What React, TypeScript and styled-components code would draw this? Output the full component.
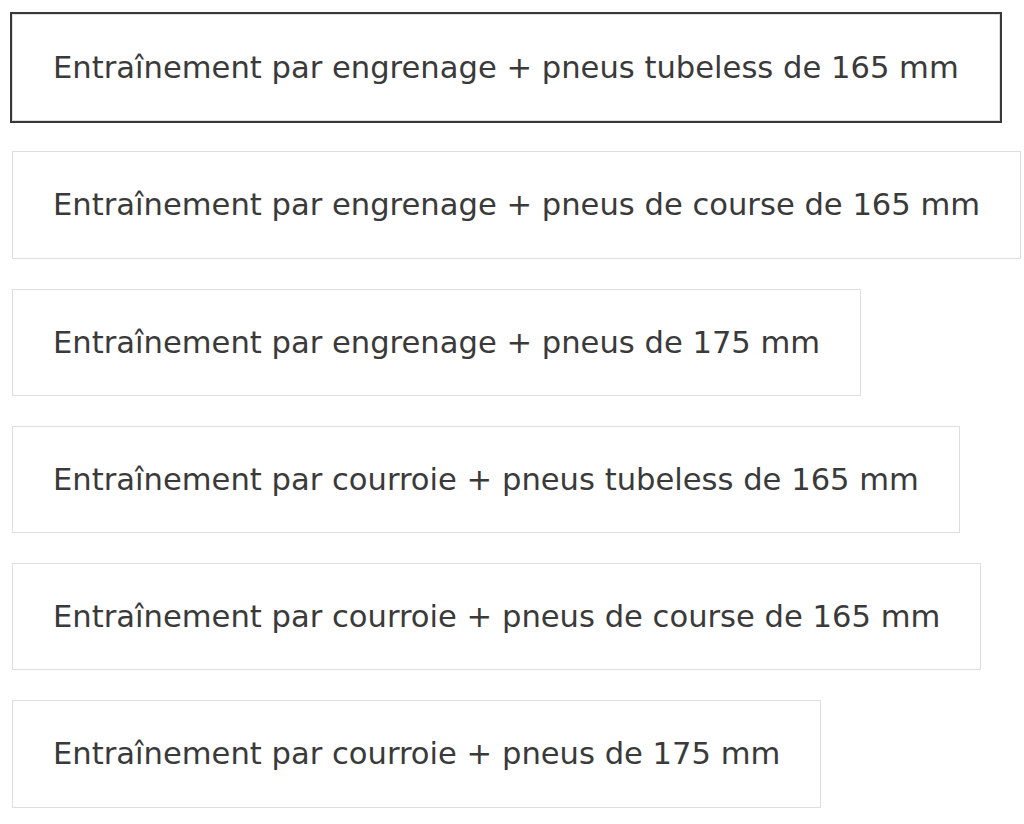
import React, { useState } from 'react';
import styled, { createGlobalStyle } from 'styled-components';

const options = [
  'Entraînement par engrenage + pneus tubeless de 165 mm',
  'Entraînement par engrenage + pneus de course de 165 mm',
  'Entraînement par engrenage + pneus de 175 mm',
  'Entraînement par courroie + pneus tubeless de 165 mm',
  'Entraînement par courroie + pneus de course de 165 mm',
  'Entraînement par courroie + pneus de 175 mm',
];

export default function App() {
  const [selected, setSelected] = useState(0);

  return (
    <>
      <GlobalStyle />
      <List>
        {options.map((item, index) => (
          <Option key={index} $active={selected === index} onClick={() => setSelected(index)}>
            {item}
          </Option>
        ))}
      </List>
    </>
  );
}

const GlobalStyle = createGlobalStyle`
  html, body {
    margin: 0;
    padding: 0;
    background: #ffffff;
    overflow: hidden;
  }
`;

const List = styled.div`
  display: flex;
  flex-direction: column;
  align-items: flex-start;
  gap: 30px;
  padding: 14px 0 0 12px;
`;

const Option = styled.button<{ $active: boolean }>`
  display: block;
  flex-shrink: 0;
  padding: 36px 40px;
  margin: 0;
  border: 1px solid #dedede;
  outline: ${({ $active }) => ($active ? '2px solid #383838' : 'none')};
  border-radius: 0;
  background: #ffffff;
  color: #3a3a3a;
  font-family: 'DejaVu Sans', 'Noto Sans', sans-serif;
  font-size: 30.6px;
  font-weight: 400;
  line-height: 33.25px;
  white-space: nowrap;
  text-align: left;
  cursor: pointer;
`;
